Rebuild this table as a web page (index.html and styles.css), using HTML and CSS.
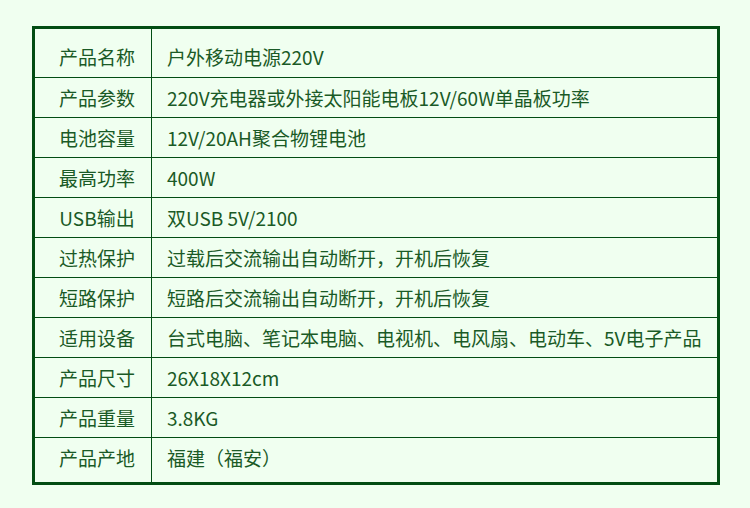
FILE: index.html
```html
<!DOCTYPE html>
<html lang="zh-CN">
<head>
<meta charset="utf-8">
<title>产品参数</title>
<link rel="stylesheet" href="styles.css">
</head>
<body>
<div class="sheet">
  <div class="row first"><div class="label">产品名称</div><div class="value">户外移动电源220V</div></div>
  <div class="row"><div class="label">产品参数</div><div class="value">220V充电器或外接太阳能电板12V/60W单晶板功率</div></div>
  <div class="row"><div class="label">电池容量</div><div class="value">12V/20AH聚合物锂电池</div></div>
  <div class="row"><div class="label">最高功率</div><div class="value">400W</div></div>
  <div class="row"><div class="label">USB输出</div><div class="value">双USB 5V/2100</div></div>
  <div class="row"><div class="label">过热保护</div><div class="value">过载后交流输出自动断开，开机后恢复</div></div>
  <div class="row"><div class="label">短路保护</div><div class="value">短路后交流输出自动断开，开机后恢复</div></div>
  <div class="row"><div class="label">适用设备</div><div class="value">台式电脑、笔记本电脑、电视机、电风扇、电动车、5V电子产品</div></div>
  <div class="row"><div class="label">产品尺寸</div><div class="value">26X18X12cm</div></div>
  <div class="row"><div class="label">产品重量</div><div class="value">3.8KG</div></div>
  <div class="row last"><div class="label">产品产地</div><div class="value">福建（福安）</div></div>
</div>
</body>
</html>
```
FILE: styles.css
```css
html, body {
  margin: 0;
  padding: 0;
  background: #f0fff0;
}
body {
  font-family: "Noto Sans CJK SC", "Noto Sans", sans-serif;
  font-size: 19px;
  color: #1a5a26;
}
.sheet {
  box-sizing: border-box;
  width: 688px;
  margin: 26px 0 0 32px;
  border: 3px solid #024d13;
}
.row {
  display: flex;
  height: 40px;
  border-top: 1px solid #024d13;
  box-sizing: border-box;
}
.row.first {
  border-top: none;
  height: 48px;
  padding-top: 8px;
}
.row.last {
  height: 45px;
  padding-bottom: 5px;
}
.label {
  flex: 0 0 116px;
  box-sizing: border-box;
  padding-left: 8px;
  text-align: center;
  line-height: 39px;
  white-space: nowrap;
}
.value {
  flex: 1;
  border-left: 1px solid #024d13;
  padding-left: 15px;
  line-height: 39px;
  white-space: nowrap;
}
.row.first .label, .row.first .value,
.row.last .label, .row.last .value {
  margin: 0;
}
.row.first .value { margin-top: -8px; padding-top: 8px; }
.row.last .value { margin-bottom: -5px; padding-bottom: 5px; }
```
